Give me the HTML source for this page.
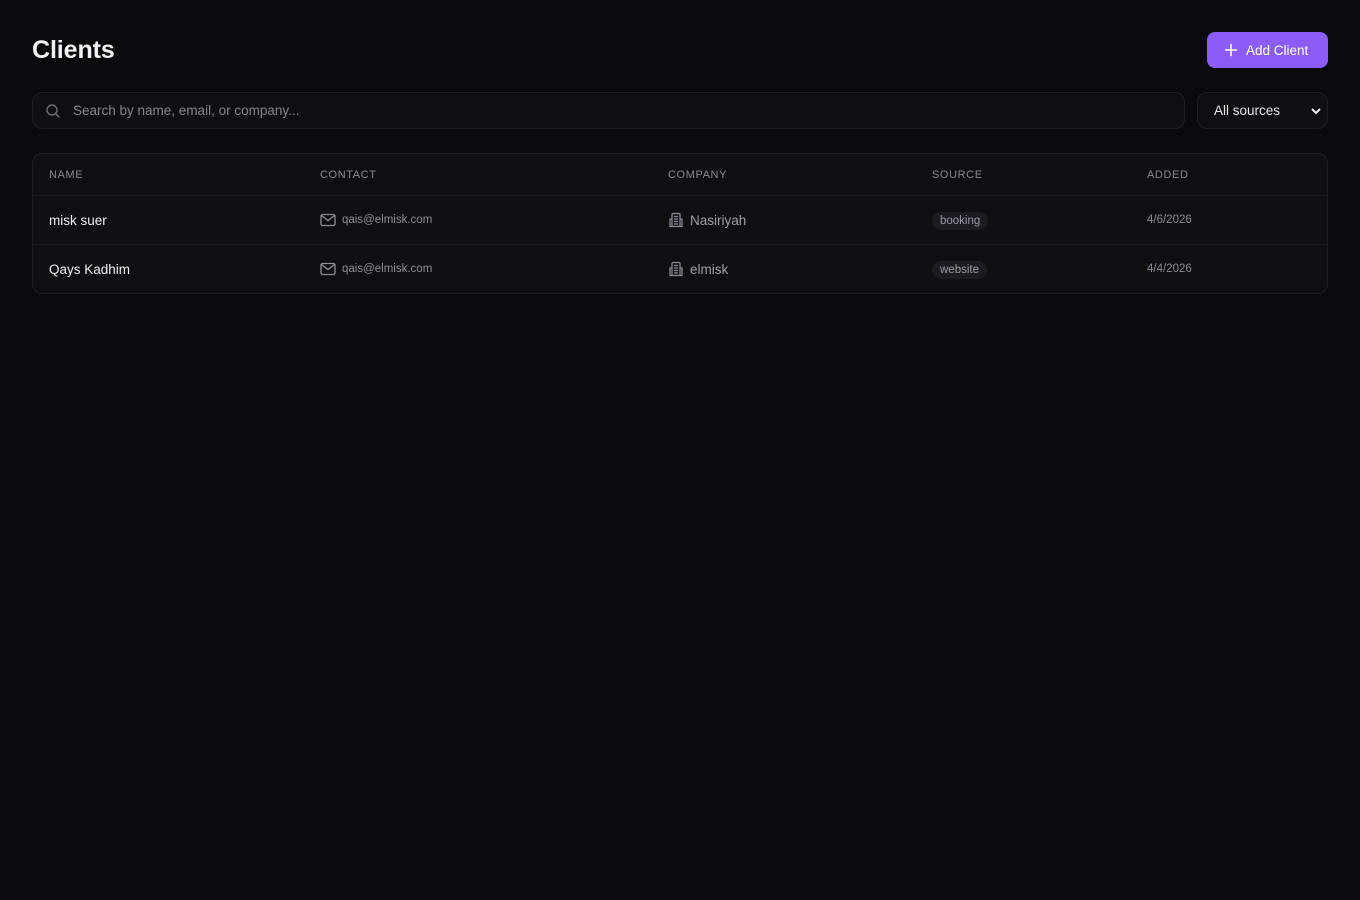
<!DOCTYPE html>
<html><head><meta charset="utf-8"><style>
*{box-sizing:border-box;margin:0;padding:0}
body{width:1360px;height:900px;background:#0a0a0c;background-image:radial-gradient(circle,#17171a 1px,transparent 1.2px);background-size:16px 16px;font-family:"Liberation Sans",sans-serif;color:#e8e8ec;position:relative;overflow:hidden}
h1{position:absolute;left:32px;top:36px;font-size:25px;font-weight:600;color:#f2f2f4;letter-spacing:-0.1px}
.btn{position:absolute;left:1207px;top:32px;width:121px;height:36px;background:#8b5cf6;border-radius:8px;color:#fff;font-size:13.5px;display:flex;align-items:center;padding-left:17px;gap:8px}
.search{position:absolute;left:32px;top:92px;width:1153px;height:37px;border:1px solid #1f1f23;border-radius:10px;background:#0f0f11;display:flex;align-items:center;padding-left:12px;gap:12px;font-size:13.5px;color:#85858e}
.sel{position:absolute;left:1197px;top:92px;width:131px;height:37px;border:1px solid #1f1f23;border-radius:10px;background:#0f0f11;font-size:13.5px;color:#e6e6ea;display:flex;align-items:center;padding-left:16px}
.sel svg{position:absolute;right:5px;top:13px}
.tbl{position:absolute;left:32px;top:153px;width:1296px;height:141px;border:1px solid #1f1f23;border-radius:10px;background:#0f0f11;overflow:hidden}
.row{position:absolute;left:0;width:100%;border-bottom:1px solid #1d1d21}
.hd{top:0;height:42px;font-size:11px;color:#8a8a93;letter-spacing:0.6px}
.c{position:absolute;top:0;height:100%;display:flex;align-items:center;gap:6px}
.r1{top:42px;height:49px}.r2{top:91px;height:48px;border:none}
.nm{font-size:13.5px;color:#eeeef2}
.em{font-size:11.5px;color:#8e8e97}
.co{font-size:13.5px;color:#a0a0a8}
.tag{font-size:11.5px;color:#9a9aa3;background:#1c1c20;border-radius:9px;padding:3px 8px;margin-top:2px}
.dt{font-size:11.5px;color:#8a8a93}
</style></head><body>
<h1>Clients</h1>
<div class="btn"><svg width="14" height="14" viewBox="0 0 14 14"><path d="M7 1.5v11M1.5 7h11" stroke="#fff" stroke-width="1.5" stroke-linecap="round"/></svg>Add Client</div>
<div class="search"><svg width="16" height="16" viewBox="0 0 16 16" fill="none" stroke="#6e6e77" stroke-width="1.4"><circle cx="7" cy="7" r="5"/><path d="M11 11l3 3" stroke-linecap="round"/></svg>Search by name, email, or company...</div>
<div class="sel">All sources<svg width="12" height="10" viewBox="0 0 12 10"><path d="M2 3l4 4 4-4" stroke="#eee" stroke-width="2" fill="none"/></svg></div>
<div class="tbl">
<div class="row hd"><div class="c" style="left:16px">NAME</div><div class="c" style="left:287px">CONTACT</div><div class="c" style="left:635px">COMPANY</div><div class="c" style="left:899px">SOURCE</div><div class="c" style="left:1114px">ADDED</div></div>
<div class="row r1"><div class="c nm" style="left:16px">misk suer</div>
<div class="c em" style="left:287px"><svg width="16" height="14" viewBox="0 0 16 14" fill="none" stroke="#8e8e97" stroke-width="1.3"><rect x="1" y="1.5" width="14" height="11" rx="1.5"/><path d="M1.5 2.5l6.5 5 6.5-5"/></svg>qais@elmisk.com</div>
<div class="c co" style="left:635px"><svg width="16" height="16" viewBox="0 0 16 16" fill="none" stroke="#8e8e97" stroke-width="1.2"><rect x="4" y="1.5" width="8" height="13" rx="1"/><path d="M4 7H2v7.5h2M12 7h2v7.5h-2M6 4.5h4M6 7h4M6 9.5h4M6 12h4"/></svg>Nasiriyah</div>
<div class="c" style="left:899px"><span class="tag">booking</span></div>
<div class="c dt" style="left:1114px">4/6/2026</div></div>
<div class="row r2"><div class="c nm" style="left:16px">Qays Kadhim</div>
<div class="c em" style="left:287px"><svg width="16" height="14" viewBox="0 0 16 14" fill="none" stroke="#8e8e97" stroke-width="1.3"><rect x="1" y="1.5" width="14" height="11" rx="1.5"/><path d="M1.5 2.5l6.5 5 6.5-5"/></svg>qais@elmisk.com</div>
<div class="c co" style="left:635px"><svg width="16" height="16" viewBox="0 0 16 16" fill="none" stroke="#8e8e97" stroke-width="1.2"><rect x="4" y="1.5" width="8" height="13" rx="1"/><path d="M4 7H2v7.5h2M12 7h2v7.5h-2M6 4.5h4M6 7h4M6 9.5h4M6 12h4"/></svg>elmisk</div>
<div class="c" style="left:899px"><span class="tag">website</span></div>
<div class="c dt" style="left:1114px">4/4/2026</div></div>
</div>
</body></html>
